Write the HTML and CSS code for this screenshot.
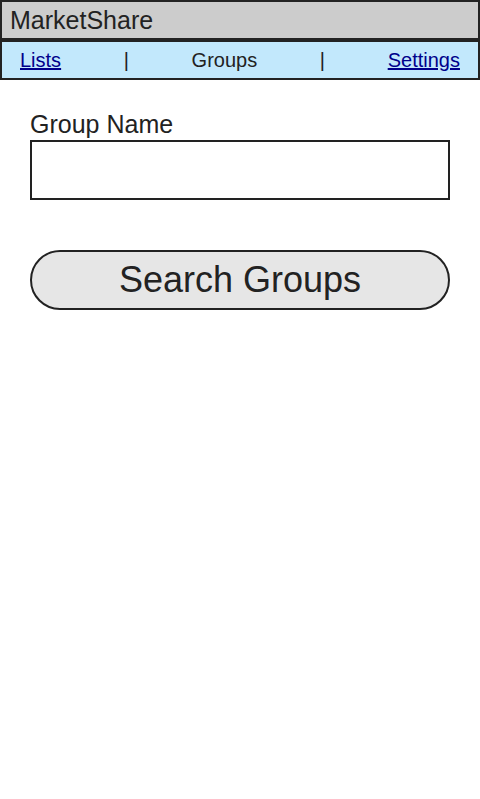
FILE: index.html
```html
<!DOCTYPE html>
<html>
<head>
<meta charset="utf-8">
<link rel="stylesheet" href="styles.css">
</head>
<body>
<header class="app-header">MarketShare</header>
<nav class="app-nav">
  <a href="#" class="nav-link">Lists</a>
  <span class="nav-sep">|</span>
  <span class="nav-current">Groups</span>
  <span class="nav-sep">|</span>
  <a href="#" class="nav-link">Settings</a>
</nav>
<main class="content">
  <label class="field-label" for="group-name">Group Name</label>
  <input id="group-name" class="text-input" type="text">
  <button class="search-btn">Search Groups</button>
</main>
</body>
</html>
```
FILE: styles.css
```css
* { box-sizing: border-box; }
html, body { margin: 0; padding: 0; background: #fff; }
body {
  font-family: "Liberation Sans", Arial, sans-serif;
  color: #222;
  width: 480px;
}
.app-header {
  height: 40px;
  background: #ccc;
  border: 2px solid #222;
  padding: 0 8px;
  font-size: 25px;
  line-height: 36px;
}
.app-nav {
  height: 40px;
  background: #c2e8fc;
  border: 2px solid #222;
  padding: 0 18px;
  display: flex;
  justify-content: space-between;
  align-items: center;
  font-size: 20px;
}
.nav-link { color: #00008b; text-decoration: underline; }
.nav-sep, .nav-current { color: #222; }
.content {
  padding: 30px 30px;
  display: flex;
  flex-direction: column;
}
.field-label {
  font-size: 25px;
  line-height: 28px;
  margin-bottom: 2px;
}
.text-input {
  height: 60px;
  border: 2px solid #222;
  background: #fff;
  margin: 0;
  font-size: 24px;
  padding: 0 8px;
  outline: none;
}
.search-btn {
  margin-top: 50px;
  height: 60px;
  border: 2px solid #222;
  border-radius: 30px;
  background: #e6e6e6;
  font-family: "Liberation Sans", Arial, sans-serif;
  font-size: 36px;
  color: #222;
  padding: 0;
}
```
